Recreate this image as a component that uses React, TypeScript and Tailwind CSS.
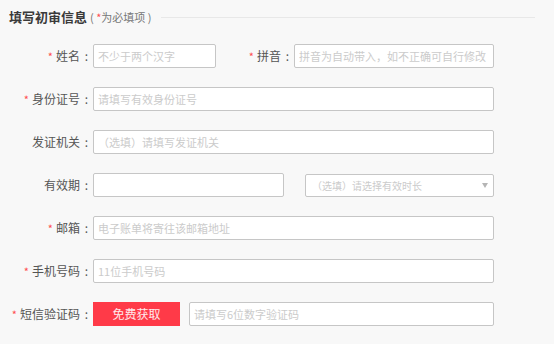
import React from "react";

function Star() {
    return <span className="text-[#ff4d4f] mr-[3px] text-[11px]">*</span>;
}

interface FieldLabelProps {
    text: string;
    required?: boolean;
    width: string;
}

function FieldLabel({ text, required, width }: FieldLabelProps) {
    return (
        <label className={`${width} shrink-0 flex justify-end items-center text-[12px] text-[#555] whitespace-nowrap`}>
            {required && <Star />}
            <span>{text}</span>
            <span className="w-[13px] text-center">:</span>
        </label>
    );
}

const inputCls =
    "h-6 bg-white border border-[#c6c6c6] rounded-[2px] px-[4px] text-[11px] text-[#333] outline-none placeholder:text-[#cbcbcb]";

export default function App() {
    return (
        <div
            className="w-[554px] h-[344px] bg-[#f8f8f8] pt-[5px] pl-[9px] pr-[19px] overflow-hidden"
            style={{ fontFamily: '"Noto Sans CJK SC", "Liberation Sans", sans-serif' }}
        >
            <div className="h-6 flex items-center">
                <h2 className="text-[13px] font-bold text-[#3a3a3a] whitespace-nowrap">填写初审信息</h2>
                <span className="ml-[3px] text-[11px] text-[#777] whitespace-nowrap">
                    ( <span className="text-[#ff4d4f]">*</span>为必填项 )
                </span>
                <div className="flex-1 ml-[9px] h-px bg-[#e8e8e8]"></div>
            </div>

            <div className="mt-[15px] -ml-[9px] flex flex-col gap-[19px]">
                <div className="flex items-center h-6">
                    <FieldLabel text="姓名" required width="w-[93px]" />
                    <input className={`${inputCls} w-[123px]`} placeholder="不少于两个汉字" />
                    <FieldLabel text="拼音" required width="w-[78px]" />
                    <input className={`${inputCls} w-[200px]`} placeholder="拼音为自动带入，如不正确可自行修改" />
                </div>

                <div className="flex items-center h-6">
                    <FieldLabel text="身份证号" required width="w-[93px]" />
                    <input className={`${inputCls} w-[401px]`} placeholder="请填写有效身份证号" />
                </div>

                <div className="flex items-center h-6">
                    <FieldLabel text="发证机关" width="w-[93px]" />
                    <input className={`${inputCls} w-[401px]`} placeholder="（选填）请填写发证机关" />
                </div>

                <div className="flex items-center h-6">
                    <FieldLabel text="有效期" width="w-[93px]" />
                    <input className={`${inputCls} w-[191px]`} />
                    <div className="ml-[21px] w-[189px] h-[23px] bg-white border border-[#c6c6c6] rounded-[2px] flex items-center justify-between pl-[6px] pr-[5px]">
                        <span className="text-[10px] text-[#cbcbcb] whitespace-nowrap">（选填）请选择有效时长</span>
                        <svg width="6" height="5" viewBox="0 0 6 5">
                            <path d="M0 0 L6 0 L3 5 Z" fill="#b5b5b5" />
                        </svg>
                    </div>
                </div>

                <div className="flex items-center h-6">
                    <FieldLabel text="邮箱" required width="w-[93px]" />
                    <input className={`${inputCls} w-[401px]`} placeholder="电子账单将寄往该邮箱地址" />
                </div>

                <div className="flex items-center h-6">
                    <FieldLabel text="手机号码" required width="w-[93px]" />
                    <input className={`${inputCls} w-[401px]`} placeholder="11位手机号码" />
                </div>

                <div className="flex items-center h-6">
                    <FieldLabel text="短信验证码" required width="w-[93px]" />
                    <button className="w-[87px] h-6 bg-[#ff3a48] text-[12px] text-white/90">免费获取</button>
                    <input className={`${inputCls} ml-[9px] w-[305px]`} placeholder="请填写6位数字验证码" />
                </div>
            </div>
        </div>
    );
}
